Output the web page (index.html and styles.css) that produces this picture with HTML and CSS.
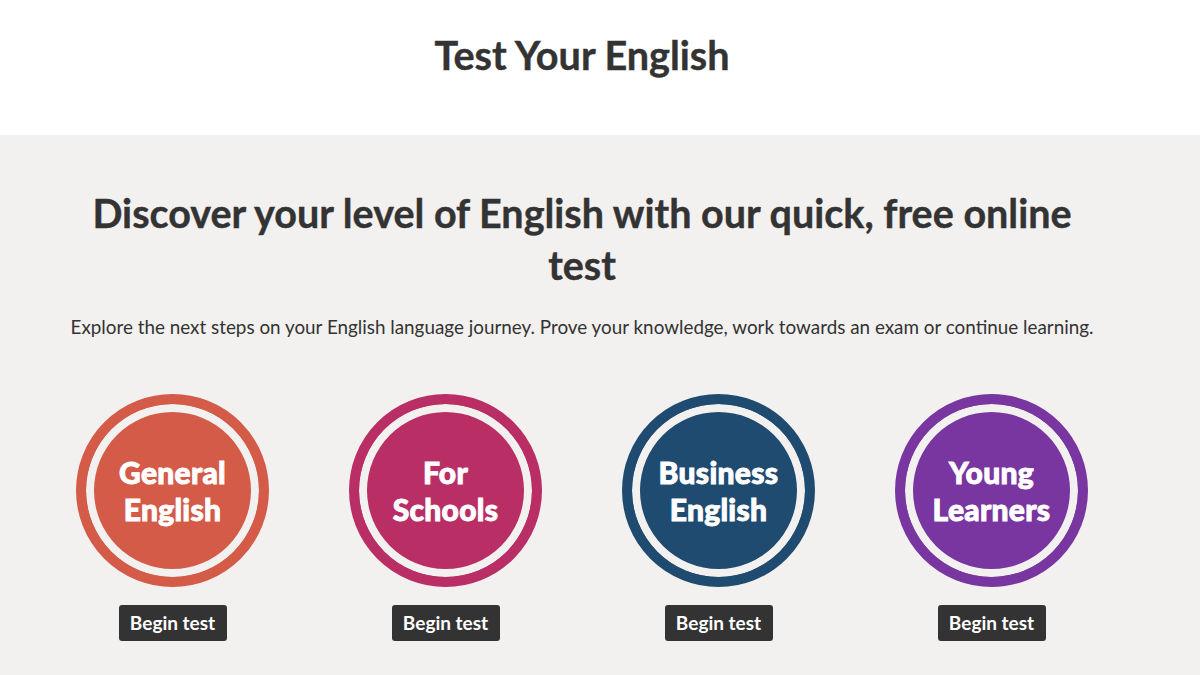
FILE: index.html
```html
<!DOCTYPE html>
<html lang="en">
<head>
    <meta charset="UTF-8">
    <meta name="viewport" content="width=device-width, initial-scale=1.0">
    <title>Test Your English</title>
    <link rel="stylesheet" href="styles.css">
</head>
<body>
    <header class="page-header">
        <div class="wrap">
            <h1 class="page-title">Test Your English</h1>
        </div>
    </header>

    <main class="tests">
        <div class="wrap">
            <h2 class="tests-title">Discover your level of English with our quick, free online test</h2>
            <p class="tests-intro">Explore the next steps on your English language journey. Prove your knowledge, work towards an exam or continue learning.</p>

            <div class="test-list">
                <div class="test-item">
                    <div class="badge badge-general">General<br>English</div>
                    <a class="begin-btn" href="#">Begin test</a>
                </div>
                <div class="test-item">
                    <div class="badge badge-schools">For<br>Schools</div>
                    <a class="begin-btn" href="#">Begin test</a>
                </div>
                <div class="test-item">
                    <div class="badge badge-business">Business<br>English</div>
                    <a class="begin-btn" href="#">Begin test</a>
                </div>
                <div class="test-item">
                    <div class="badge badge-young">Young<br>Learners</div>
                    <a class="begin-btn" href="#">Begin test</a>
                </div>
            </div>
        </div>
    </main>
</body>
</html>
```

FILE: styles.css
```css
body {
    font-family: Lato, 'Noto Sans', sans-serif;
    margin: 0;
    padding: 0;
    color: #333;
    background-color: #f2f1ef;
}

.wrap {
    width: 1164px;
}

.page-header {
    background-color: #fff;
    height: 135px;
}

.page-title {
    margin: 0;
    padding-top: 32px;
    text-align: center;
    font-size: 39.6px;
    font-weight: 700;
    line-height: 46px;
    -webkit-text-stroke: 0.4px #333;
}

.tests {
    padding-top: 52px;
}

.tests-title {
    margin: 0 auto;
    width: 1000px;
    text-align: center;
    font-size: 39.5px;
    font-weight: 700;
    line-height: 52px;
    -webkit-text-stroke: 0.4px #333;
}

.tests-intro {
    margin: 22px 0 0;
    text-align: center;
    font-size: 18.85px;
    line-height: 28px;
}

.test-list {
    display: grid;
    grid-template-columns: repeat(4, 1fr);
    margin: 53px 36px 0;
}

.test-item {
    display: flex;
    flex-direction: column;
    align-items: center;
}

.badge {
    width: 193px;
    height: 193px;
    box-sizing: border-box;
    border-radius: 50%;
    border: 10px solid;
    box-shadow: inset 0 0 0 8px #f2f1ef;
    display: flex;
    align-items: center;
    justify-content: center;
    text-align: center;
    color: #fff;
    font-size: 30px;
    font-weight: 900;
    line-height: 37px;
    letter-spacing: 0.3px;
    -webkit-text-stroke: 0.9px #fff;
}

.badge-general {
    background-color: #d35b48;
    border-color: #d35b48;
}

.badge-schools {
    background-color: #b92e65;
    border-color: #b92e65;
}

.badge-business {
    background-color: #1f4b70;
    border-color: #1f4b70;
}

.badge-young {
    background-color: #7935a0;
    border-color: #7935a0;
}

.begin-btn {
    margin-top: 18px;
    display: block;
    width: 108px;
    height: 36px;
    box-sizing: border-box;
    background-color: #333;
    border-radius: 3px;
    color: #fff;
    text-decoration: none;
    text-align: center;
    font-size: 19px;
    font-weight: 700;
    line-height: 36px;
}
```
